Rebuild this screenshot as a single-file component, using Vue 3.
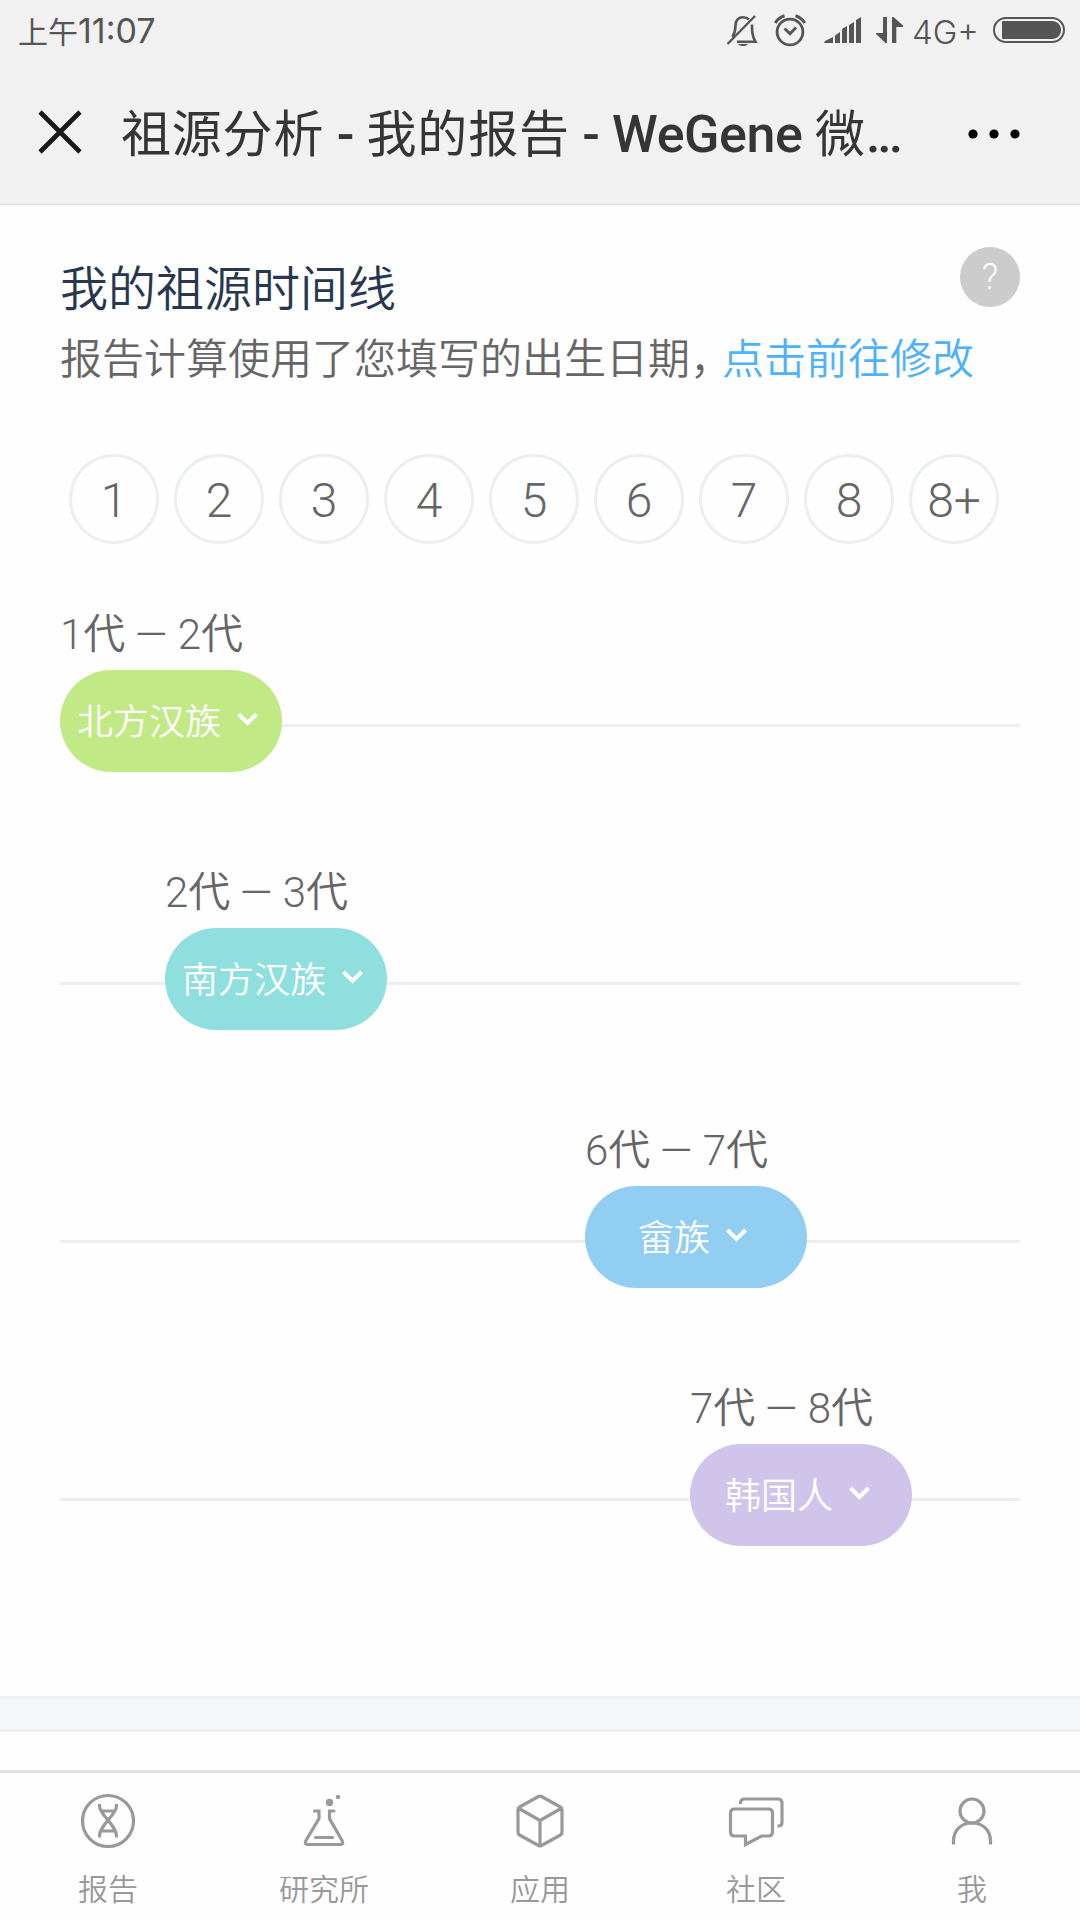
<script setup>
import { ref } from 'vue';

const generations = ['1', '2', '3', '4', '5', '6', '7', '8', '8+'];

// offset: 从第几代的圆圈开始
const timeline = ref([
    { from: 1, to: 2, name: '北方汉族', color: '#c1e985', offset: 0 },
    { from: 2, to: 3, name: '南方汉族', color: '#8fdfdf', offset: 1 },
    { from: 6, to: 7, name: '畲族', color: '#92cdf2', offset: 5 },
    { from: 7, to: 8, name: '韩国人', color: '#d0c4ea', offset: 6 },
]);
</script>

<template>
  <div class="page">
    <div class="status-bar">
      <div class="time">上午<span>11:07</span></div>
      <div class="status-icons">
        <svg class="bell" width="32" height="34" viewBox="0 0 32 34" fill="none" stroke="#555" stroke-width="2.6">
          <path d="M6.5 24C9 20 9.500 17 9.500 12.500C9.500 7 12.500 4.300 17 4.300C19.500 4.300 21.500 5 23 6.500" />
          <path d="M26 11.500V14C26 20 26.500 24 29.500 28.800H11" />
          <path d="M1.500 31L29 3" stroke-width="2.4" />
          <path d="M12 31H22C20 33.800 14 33.800 12 31Z" fill="#555" stroke="none" />
        </svg>
        <svg class="alarm" width="32" height="34" viewBox="0 0 32 34" fill="none" stroke="#555">
          <circle cx="16" cy="19" r="12.900" stroke-width="2.800" />
          <path d="M10.500 15.500L16 20.700L22 14.500" stroke-width="3" />
          <path d="M1.200 10C3.500 6.300 6.500 4 10.500 2.800M30.800 10C28.500 6.300 25.500 4 21.500 2.800" stroke-width="3" />
        </svg>
        <svg class="signal" width="38" height="26" viewBox="0 0 38 26" fill="#555">
          <path d="M0 26L1 24L9 20V26ZM11 18.500L16 15V26H11ZM18 12L23 9V26H18ZM25 8L30 5V26H25ZM32 3L37 0V26H32Z" />
        </svg>
        <svg class="arrows" width="28" height="26" viewBox="0 0 28 26" fill="#555">
          <path d="M7 0H11V26H9.500L0 17V16H7ZM16 0H17.500L27 8.500V10H20.300V26H16Z" />
        </svg>
        <span class="network">4G+</span>
        <svg class="battery" width="72" height="26" viewBox="0 0 72 26">
          <rect x="1" y="1" width="70" height="24" rx="12" fill="none" stroke="#555" stroke-width="2" />
          <path d="M10 4H59C71 4 71 22 59 22H10Q9 22 9 21V5Q9 4 10 4Z" fill="#555" />
        </svg>
      </div>
    </div>

    <div class="nav-bar">
      <svg class="close" width="44" height="44" viewBox="0 0 44 44" stroke="#1a1a1a" stroke-width="4.600">
        <path d="M2 2L42 42M42 2L2 42" />
      </svg>
      <div class="nav-title">祖源分析<b> - </b>我的报告<b> - WeGene </b>微<b class="dots">...</b></div>
      <svg class="more" width="52" height="10" viewBox="0 0 52 10">
        <circle cx="5" cy="5" r="4.600" />
        <circle cx="26" cy="5" r="4.600" />
        <circle cx="47" cy="5" r="4.600" />
      </svg>
    </div>

    <div class="content">
      <div class="heading">
        <h3>我的祖源时间线</h3>
        <span class="help">?</span>
      </div>
      <p class="desc">报告计算使用了您填写的出生日期<span class="comma">，</span><a>点击前往修改</a></p>

      <div class="generations">
        <span v-for="g in generations" :key="g" class="generation">{{ g }}</span>
      </div>

      <div v-for="item in timeline" :key="item.name" class="row">
        <div class="row-inner" :style="{ marginLeft: item.offset * 105 + 'px' }">
          <div class="label">{{ item.from }}<i>代</i> — {{ item.to }}<i>代</i></div>
          <div class="pill" :style="{ background: item.color }">
            {{ item.name }}
            <svg width="44" height="24" viewBox="0 0 44 24" fill="none" stroke="#fff" stroke-width="4">
              <path d="M17.500 6L26.500 15L35.500 6" />
            </svg>
          </div>
        </div>
      </div>
    </div>

    <div class="divider"></div>

    <div class="tab-bar">
      <div class="tab">
        <svg width="60" height="60" viewBox="0 0 60 60">
          <circle cx="30" cy="30" r="25.500" />
          <path d="M21.500 13V15C21.500 24 38.500 34 38.500 45V46.500M38.500 13V15C38.500 24 21.500 34 21.500 45V46.500M24 20H36M24 40H36" />
        </svg>
        <span>报告</span>
      </div>
      <div class="tab">
        <svg width="60" height="60" viewBox="0 0 60 60">
          <path d="M20.500 20H25V27.500L12 49.500Q10 53.500 13.500 53.500H46.500Q50 53.500 48 49.500L35.500 27.500V20H40M21.500 46.500H38.500" stroke-linecap="round" />
          <circle class="dot" cx="35.500" cy="11.500" r="3.700" />
          <circle class="dot" cx="44" cy="6" r="2.200" />
        </svg>
        <span>研究所</span>
      </div>
      <div class="tab">
        <svg width="60" height="60" viewBox="0 0 60 60" stroke-linejoin="round">
          <path d="M28.500 5.500Q30 4.700 31.500 5.500L50.500 16Q52 17 52 19V41Q52 43 50.500 44L31.500 54.500Q30 55.300 28.500 54.500L9.500 44Q8 43 8 41V19Q8 17 9.500 16ZM9 17.500L30 29.500L51 17.500M30 29.500V54" />
        </svg>
        <span>应用</span>
      </div>
      <div class="tab">
        <svg width="60" height="60" viewBox="0 0 60 60">
          <path d="M8.500 18H42.500Q46.500 18 46.500 22V41Q46.500 45 42.500 45H35.500L19.500 53.500V45H8.500Q4.500 45 4.500 41V22Q4.500 18 8.500 18Z" />
          <path d="M14.500 13V12Q14.500 8 18.500 8H52Q56 8 56 12V31.500Q56 35 52.500 35H51.500" />
        </svg>
        <span>社区</span>
      </div>
      <div class="tab">
        <svg width="60" height="60" viewBox="0 0 60 60">
          <circle cx="30" cy="20" r="12" />
          <path d="M11.500 53.500V50C11.500 39 19.500 32 30 32S48.500 39 48.500 50V53.500" />
        </svg>
        <span>我</span>
      </div>
    </div>
  </div>
</template>

<style>
body {
    margin: 0;
    background: #fefefe;
}
</style>

<style scoped>
.page {
    display: flex;
    flex-direction: column;
    width: 1080px;
    height: 1920px;
    overflow: hidden;
    background: #fefefe;
    color: #666;
    font-family: Roboto, "Noto Sans CJK SC", sans-serif;
    font-weight: 300;
    box-sizing: border-box;
}

.status-bar {
    display: flex;
    justify-content: space-between;
    align-items: center;
    height: 60px;
    padding: 0 15px 0 18px;
    background: #f1f1f1;
    color: #555;
    font-weight: 400;
}
.time {
    padding-top: 3px;
    font-size: 30px;
    line-height: 60px;
}
.time span,
.network {
    font-family: Inter, sans-serif;
    font-size: 34px;
}
.status-icons {
    display: flex;
    align-items: center;
}
.alarm {
    margin-left: 16px;
}
.signal {
    margin-left: 18px;
}
.arrows {
    margin: 0 8px 0 14px;
}
.network {
    width: 68px;
    padding-top: 3px;
    font-size: 33px;
    font-weight: 350;
    line-height: 60px;
}
.battery {
    margin-left: 13px;
}

.nav-bar {
    display: flex;
    align-items: center;
    height: 144px;
    padding: 0 60px 0 38px;
    background: #f1f1f1;
    border-bottom: 1px solid #dedede;
}
.nav-title {
    flex: 1;
    margin-left: 39px;
    padding-top: 6px;
    color: #353535;
    font-size: 50px;
    font-weight: 400;
    letter-spacing: 0.8px;
    line-height: 80px;
    white-space: pre;
}
.nav-title b {
    font-size: 52px;
    font-weight: 500;
    letter-spacing: -0.4px;
}
.nav-title .dots {
    letter-spacing: -3px;
}
.more {
    margin-top: 3px;
}

.content {
    height: 1491px;
    padding: 0 60px;
    box-sizing: border-box;
}
.heading {
    display: flex;
    justify-content: space-between;
    align-items: flex-start;
    height: 117px;
    padding-top: 42px;
    box-sizing: border-box;
}
h3 {
    margin: 11px 0 0;
    color: #26374f;
    font-size: 48px;
    font-weight: 350;
    line-height: 64px;
}
.help {
    width: 60px;
    height: 60px;
    border-radius: 50%;
    background: #ccc;
    color: #fff;
    font-size: 36px;
    line-height: 60px;
    text-align: center;
}
.desc {
    margin: 8px 0 0;
    font-size: 42px;
    font-weight: 350;
    line-height: 60px;
    white-space: nowrap;
}
.comma {
    margin-right: 11px;
    font-feature-settings: "halt";
}
.desc a {
    color: #4db1fc;
}

.generations {
    display: flex;
    gap: 15px;
    margin: 64px 9px 0;
}
.generation {
    width: 90px;
    height: 90px;
    border: 3px solid #ebeff2;
    border-radius: 50%;
    box-sizing: border-box;
    font-size: 48px;
    line-height: 88px;
    text-align: center;
}

.row {
    height: 258px;
    padding-top: 60px;
    box-sizing: border-box;
    background: linear-gradient(#ebeff2, #ebeff2) 0 180px / 100% 3px no-repeat;
}
.row-inner {
    width: 222px;
}
.label {
    height: 66px;
    padding-top: 1px;
    box-sizing: border-box;
    font-size: 42px;
    line-height: 60px;
    white-space: nowrap;
}
.label i {
    font-style: normal;
    font-weight: 350;
    letter-spacing: -0.5px;
}
.pill {
    display: flex;
    justify-content: center;
    align-items: center;
    height: 102px;
    padding-bottom: 4px;
    border-radius: 51px;
    box-sizing: border-box;
    color: #fff;
    font-size: 36px;
    font-weight: 350;
}
.pill svg {
    margin-top: 2px;
}

.divider {
    height: 36px;
    box-sizing: border-box;
    border-top: 3px solid #ebeff2;
    border-bottom: 3px solid #ebeff2;
    background: #f3f7fa;
}

.tab-bar {
    display: flex;
    height: 150px;
    margin-top: 38px;
    border-top: 3px solid #dfe3e6;
    box-sizing: border-box;
}
.tab {
    flex: 1;
    display: flex;
    flex-direction: column;
    align-items: center;
    padding-top: 18px;
    color: #999;
    font-size: 30px;
    font-weight: 350;
}
.tab svg {
    fill: none;
    stroke: #999;
    stroke-width: 3.2;
}
.tab .dot {
    fill: #999;
    stroke: none;
}
.tab span {
    margin-top: 17px;
    line-height: 44px;
}
</style>
